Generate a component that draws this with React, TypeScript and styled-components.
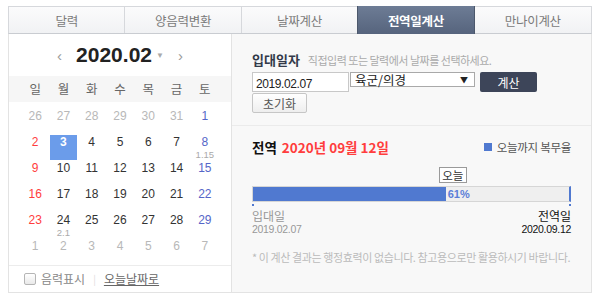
import React from 'react'
import styled, { createGlobalStyle, css } from 'styled-components'

const GlobalStyle = createGlobalStyle`
  html, body {
    margin: 0;
    padding: 0;
    background: #ffffff;
  }
  body {
    font-family: "Noto Sans CJK KR", "Liberation Sans", sans-serif;
    color: #333;
  }
  * { box-sizing: border-box; }
`

const KR = `"Noto Sans CJK KR", "Liberation Sans", sans-serif`
const NUM = `"Liberation Sans", "Noto Sans CJK KR", sans-serif`

const Page = styled.div`
  width: 584px;
  margin: 6px 0 0 8px;
`

const TabBar = styled.div`
  display: grid;
  grid-template-columns: repeat(5, 1fr);
  height: 28px;
  border: 1px solid #d6d8dc;
  border-bottom: 1px solid #c9ccd1;
  background: linear-gradient(#fbfbfc, #f1f2f4);
`

const Tab = styled.div<{ $active?: boolean; $last?: boolean }>`
  display: flex;
  align-items: center;
  justify-content: center;
  font-family: ${KR};
  font-size: 12.5px;
  color: #7a7a7a;
  letter-spacing: -0.3px;
  border-right: ${p => (p.$last ? 'none' : '1px solid #d6d8dc')};
  ${p =>
    p.$active &&
    css`
      background: linear-gradient(#6d7c95, #56647d);
      color: #fff;
      font-weight: 700;
      border-right: 1px solid #4c586c;
      border-left: 1px solid #4c586c;
      margin: -1px 0 -1px -1px;
    `}
`

const Body = styled.div`
  display: flex;
  height: 259px;
`

const CalPanel = styled.div`
  width: 226px;
  display: flex;
  flex-direction: column;
  border-left: 1px solid #e3e3e3;
  border-right: 1px solid #e3e3e3;
  border-bottom: 1px solid #e3e3e3;
  background: #fff;
`

const CalHead = styled.div`
  height: 43px;
  display: flex;
  align-items: center;
  justify-content: center;
  gap: 14px;
`

const Arrow = styled.span`
  font-family: ${NUM};
  font-size: 15px;
  color: #9a9a9a;
  padding-top: 1px;
`

const Title = styled.div`
  font-family: ${NUM};
  font-size: 21px;
  font-weight: 700;
  color: #222;
  display: flex;
  align-items: center;
  gap: 4px;
`

const Caret = styled.span`
  font-size: 8px;
  color: #aaa;
  font-weight: 400;
`

const WeekRow = styled.div`
  height: 26px;
  display: grid;
  grid-template-columns: repeat(7, 1fr);
  padding: 0 12px;
  background: #f6f6f6;
  align-items: center;
`

const WeekDay = styled.div`
  text-align: center;
  font-family: ${KR};
  font-size: 12.5px;
  color: #666;
`

const DayGrid = styled.div`
  display: grid;
  grid-template-columns: repeat(7, 1fr);
  grid-auto-rows: 26px;
  padding: 7px 12px 0;
  flex: 1;
`

const Cell = styled.div`
  display: flex;
  justify-content: center;
`

const DayBox = styled.div<{ $tone: string; $sel?: boolean }>`
  width: 27px;
  height: 25px;
  display: flex;
  flex-direction: column;
  align-items: center;
  padding-top: 1px;
  font-family: ${NUM};
  font-size: 12px;
  line-height: 13px;
  color: ${p => (p.$sel ? '#fff' : p.$tone)};
  font-weight: ${p => (p.$sel ? 700 : 400)};
  background: ${p => (p.$sel ? '#6b9cea' : 'transparent')};
`

const Lunar = styled.span`
  font-size: 9.5px;
  line-height: 11px;
  color: #aaa;
  font-weight: 400;
`

const CalFoot = styled.div`
  height: 28px;
  border-top: 1px solid #ececec;
  display: flex;
  align-items: center;
  padding-left: 15px;
  font-family: ${KR};
  font-size: 12px;
  color: #888;
  gap: 5px;
`

const Check = styled.span`
  width: 12px;
  height: 12px;
  border: 1px solid #b5b5b5;
  border-radius: 2px;
  background: linear-gradient(#fff, #e9e9e9);
`

const Divider = styled.span`
  color: #ddd;
  margin: 0 3px;
  font-size: 10px;
`

const TodayLink = styled.span`
  text-decoration: underline;
  color: #666;
`

const Side = styled.div`
  flex: 1;
  display: flex;
  flex-direction: column;
  background: #f8f8f8;
  border-right: 1px solid #e3e3e3;
  border-bottom: 1px solid #e3e3e3;
`

const Form = styled.div`
  padding: 16px 20px 0;
  height: 92px;
  border-bottom: 1px solid #ebebeb;
`

const LabelRow = styled.div`
  display: flex;
  align-items: baseline;
  gap: 8px;
  height: 20px;
`

const Label = styled.span`
  font-family: ${KR};
  font-weight: 700;
  font-size: 13px;
  color: #333a4a;
`

const Hint = styled.span`
  font-family: ${KR};
  font-size: 11px;
  letter-spacing: -0.5px;
  color: #aaa;
`

const Controls = styled.div`
  display: flex;
  align-items: flex-start;
  margin-top: 2px;
  height: 20px;
`

const DateInput = styled.div`
  width: 97px;
  height: 20px;
  border: 1px solid #c8c8c8;
  background: #fff;
  font-family: ${NUM};
  font-size: 12px;
  letter-spacing: -0.4px;
  padding: 4px 0 0 3px;
  color: #222;
`

const Select = styled.div`
  width: 125px;
  height: 15px;
  border: 1px solid #a9a9a9;
  background: #fff;
  margin-left: 1px;
  display: flex;
  justify-content: space-between;
  align-items: center;
  padding: 0 6px 0 4px;
  font-family: ${KR};
  font-size: 12.5px;
  color: #222;
`

const Tri = styled.span`
  font-size: 8px;
  color: #222;
`

const CalcBtn = styled.div`
  width: 57px;
  height: 20px;
  margin-left: 5px;
  background: #3d4559;
  border-radius: 2px;
  color: #fff;
  font-family: ${KR};
  font-size: 12px;
  display: flex;
  align-items: center;
  justify-content: center;
`

const ResetBtn = styled.div`
  width: 55px;
  height: 20px;
  margin-top: 1px;
  border: 1px solid #c6c6c6;
  border-radius: 2px;
  background: linear-gradient(#fff, #eee);
  font-family: ${KR};
  font-size: 12px;
  color: #555;
  display: flex;
  align-items: center;
  justify-content: center;
`

const Result = styled.div`
  padding: 12px 20px 0;
  flex: 1;
`

const ResultHead = styled.div`
  display: flex;
  justify-content: space-between;
  align-items: center;
  height: 18px;
`

const Discharge = styled.div`
  font-family: ${KR};
  font-size: 13.5px;
  font-weight: 700;
  color: #111;
  display: flex;
  gap: 5px;
`

const Red = styled.span`
  color: #ff3d3d;
`

const Legend = styled.div`
  display: flex;
  align-items: center;
  gap: 5px;
  font-family: ${KR};
  font-size: 11.5px;
  color: #555;
  letter-spacing: -0.3px;
`

const Swatch = styled.span`
  width: 8px;
  height: 8px;
  background: #5079d0;
`

const Track = styled.div`
  position: relative;
  margin-top: 30px;
  height: 16px;
  width: 319px;
  border: 1px solid #d6d6d6;
  border-right: 2px solid #5079d0;
  background: #efefef;

  &::before,
  &::after {
    content: '';
    position: absolute;
    bottom: -5px;
    width: 2px;
    height: 2px;
    background: #5079d0;
  }
  &::before { left: -1px; }
  &::after { right: -2px; }
`

const Fill = styled.div`
  height: 100%;
  background: #5079d0;
`

const Pct = styled.span`
  position: absolute;
  top: 1px;
  font-family: ${NUM};
  font-size: 11px;
  font-weight: 700;
  color: #5b7ed8;
`

const TodayTag = styled.span`
  position: absolute;
  top: -20px;
  width: 28px;
  height: 16px;
  border: 1px solid #9a9a9a;
  background: #fff;
  font-family: ${KR};
  font-size: 11.5px;
  line-height: 14px;
  text-align: center;
  color: #333;
`

const Ends = styled.div`
  display: flex;
  justify-content: space-between;
  width: 319px;
  margin-top: 7px;
`

const End = styled.div<{ $right?: boolean; $dark?: boolean }>`
  display: flex;
  flex-direction: column;
  align-items: ${p => (p.$right ? 'flex-end' : 'flex-start')};
  color: ${p => (p.$dark ? '#111' : '#999')};
`

const EndName = styled.span`
  font-family: ${KR};
  font-size: 12px;
  line-height: 14px;
`

const EndDate = styled.span`
  font-family: ${NUM};
  font-size: 10.5px;
  letter-spacing: -0.3px;
  line-height: 13px;
`

const Note = styled.div`
  margin-top: 13px;
  font-family: ${KR};
  font-size: 11px;
  letter-spacing: -0.4px;
  color: #bbb;
`

type Day = { n: number; tone: string; lunar?: string; sel?: boolean }

const GRAY = '#b8b8b8'
const SUN = '#ff3d3d'
const SAT = '#5566c8'
const NORMAL = '#333'

const buildDays = (): Day[] => {
  const days: Day[] = []
  ;[26, 27, 28, 29, 30, 31].forEach(n => days.push({ n, tone: GRAY }))
  for (let n = 1; n <= 29; n++) {
    const col = days.length % 7
    const tone = col === 0 ? SUN : col === 6 ? SAT : NORMAL
    days.push({
      n,
      tone,
      sel: n === 3,
      lunar: n === 8 ? '1.15' : n === 24 ? '2.1' : undefined,
    })
  }
  for (let n = 1; n <= 7; n++) days.push({ n, tone: GRAY })
  return days
}

const tabs = ['달력', '양음력변환', '날짜계산', '전역일계산', '만나이계산']
const weekdays = ['일', '월', '화', '수', '목', '금', '토']

const App: React.FC = () => {
  const days = buildDays()
  const percent = 61

  return (
    <>
      <GlobalStyle />
      <Page>
        <TabBar>
          {tabs.map((t, i) => (
            <Tab key={t} $active={i === 3} $last={i === tabs.length - 1}>
              {t}
            </Tab>
          ))}
        </TabBar>
        <Body>
          <CalPanel>
            <CalHead>
              <Arrow>&lsaquo;</Arrow>
              <Title>
                2020.02<Caret>▼</Caret>
              </Title>
              <Arrow>&rsaquo;</Arrow>
            </CalHead>
            <WeekRow>
              {weekdays.map(w => (
                <WeekDay key={w}>{w}</WeekDay>
              ))}
            </WeekRow>
            <DayGrid>
              {days.map((d, i) => (
                <Cell key={i}>
                  <DayBox $tone={d.tone} $sel={d.sel}>
                    {d.n}
                    {d.lunar && <Lunar>{d.lunar}</Lunar>}
                  </DayBox>
                </Cell>
              ))}
            </DayGrid>
            <CalFoot>
              <Check />
              음력표시
              <Divider>|</Divider>
              <TodayLink>오늘날짜로</TodayLink>
            </CalFoot>
          </CalPanel>
          <Side>
            <Form>
              <LabelRow>
                <Label>입대일자</Label>
                <Hint>직접입력 또는 달력에서 날짜를 선택하세요.</Hint>
              </LabelRow>
              <Controls>
                <DateInput>2019.02.07</DateInput>
                <Select>
                  육군/의경<Tri>▼</Tri>
                </Select>
                <CalcBtn>계산</CalcBtn>
              </Controls>
              <ResetBtn>초기화</ResetBtn>
            </Form>
            <Result>
              <ResultHead>
                <Discharge>
                  전역<Red>2020년 09월 12일</Red>
                </Discharge>
                <Legend>
                  <Swatch />
                  오늘까지 복무율
                </Legend>
              </ResultHead>
              <Track>
                <Fill style={{ width: `${percent}%` }} />
                <Pct style={{ left: `calc(${percent}% + 2px)` }}>{percent}%</Pct>
                <TodayTag style={{ left: `calc(${percent}% - 7px)` }}>오늘</TodayTag>
              </Track>
              <Ends>
                <End>
                  <EndName>입대일</EndName>
                  <EndDate>2019.02.07</EndDate>
                </End>
                <End $right $dark>
                  <EndName>전역일</EndName>
                  <EndDate>2020.09.12</EndDate>
                </End>
              </Ends>
              <Note>* 이 계산 결과는 행정효력이 없습니다. 참고용으로만 활용하시기 바랍니다.</Note>
            </Result>
          </Side>
        </Body>
      </Page>
    </>
  )
}

export default App
